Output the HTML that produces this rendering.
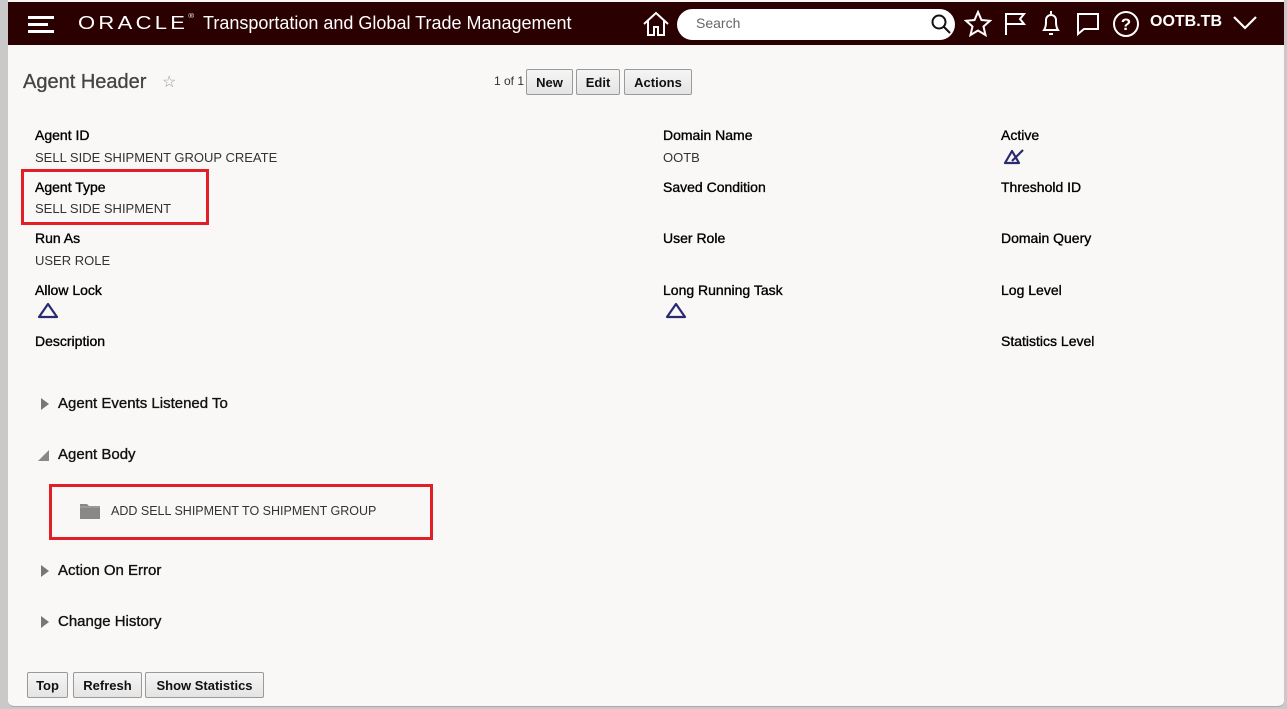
<!DOCTYPE html>
<html><head><meta charset="utf-8"><style>
*{margin:0;padding:0;box-sizing:border-box}
body{width:1287px;height:709px;background:#c9c9c9;font-family:"Liberation Sans",Arial,sans-serif;position:relative;overflow:hidden}
#page{position:absolute;left:8px;top:0;width:1276px;height:707px;background:#f9f8f7;border-radius:0 0 6px 6px;border-bottom:1px solid #aaa}
#bar{position:absolute;left:0;top:2px;width:1276px;height:43px;background:#2b0000;color:#fff}
.a{position:absolute}
.lbl{position:absolute;font-size:14px;color:#000;-webkit-text-stroke:0.35px #000}
.val{position:absolute;font-size:13px;color:#333}
.btn{position:absolute;height:26px;border:1px solid #9a9a9a;border-radius:2px;background:linear-gradient(#f5f5f5,#e4e4e4);font-size:13px;font-weight:bold;color:#111;display:flex;align-items:center;justify-content:center}
.sec{position:absolute;font-size:15px;color:#111;-webkit-text-stroke:0.35px #111}
.tri{position:absolute;width:0;height:0;border-top:6px solid transparent;border-bottom:6px solid transparent;border-left:8px solid #777}
.red{position:absolute;border:3px solid #e21e26}
</style></head><body>
<div id="page">
<div id="bar">
 <div class="a" style="left:20px;top:14px;width:26px;height:3px;background:#fff"></div>
 <div class="a" style="left:20px;top:21px;width:20px;height:3px;background:#fff"></div>
 <div class="a" style="left:20px;top:28px;width:26px;height:3px;background:#fff"></div>
 <div class="a" style="left:70px;top:8px;font-size:22px;letter-spacing:3.3px;transform:scaleY(0.85);transform-origin:left center">ORACLE<span style="font-size:8px;vertical-align:top;letter-spacing:0">®</span></div>
 <div class="a" style="left:195px;top:11px;font-size:18px">Transportation and Global Trade Management</div>
 <svg class="a" style="left:633px;top:8px" width="30" height="28" viewBox="0 0 30 28" fill="none" stroke="#fff" stroke-width="2"><path d="M3 14L15 3l12 11M7 11v14h6v-8h4v8h6V11"/></svg>
 <div class="a" style="left:669px;top:7px;width:278px;height:31px;background:#fff;border-radius:16px;color:#666;font-size:14px;padding:6px 0 0 19px">Search</div>
 <svg class="a" style="left:922px;top:11px" width="22" height="22" viewBox="0 0 22 22" fill="none" stroke="#111" stroke-width="2"><circle cx="9" cy="9" r="6.5"/><path d="M14 14l6 6"/></svg>
 <svg class="a" style="left:956px;top:8px" width="28" height="28" viewBox="0 0 28 28" fill="none" stroke="#fff" stroke-width="2"><path d="M14 2l3.5 8 8.5.8-6.5 5.7 2 8.5L14 20.5 6.5 25l2-8.5L2 10.8l8.5-.8z"/></svg>
 <svg class="a" style="left:995px;top:9px" width="24" height="26" viewBox="0 0 24 26" fill="none" stroke="#fff" stroke-width="2"><path d="M3 24V3h18l-4 5 4 5H3"/></svg>
 <svg class="a" style="left:1031px;top:6px" width="24" height="30" viewBox="0 0 24 30" fill="none" stroke="#fff" stroke-width="2"><path d="M12 3v3M5 22c2-3 2-6 2-10a5 5 0 0110 0c0 4 0 7 2 10zM10 26h4"/></svg>
 <svg class="a" style="left:1067px;top:9px" width="26" height="26" viewBox="0 0 26 26" fill="none" stroke="#fff" stroke-width="2"><path d="M3 3h20v15H9l-6 5z"/></svg>
 <svg class="a" style="left:1103px;top:7px" width="30" height="30" viewBox="0 0 30 30" fill="none" stroke="#fff" stroke-width="2"><circle cx="15" cy="15" r="12"/><text x="15" y="21" fill="#fff" stroke="none" font-size="17" font-weight="bold" text-anchor="middle" font-family="Liberation Sans">?</text></svg>
 <div class="a" style="left:1142px;top:11px;font-size:16px;font-weight:bold">OOTB.TB</div>
 <svg class="a" style="left:1224px;top:12px" width="26" height="18" viewBox="0 0 26 18" fill="none" stroke="#fff" stroke-width="2.2"><path d="M2 3l11 11L24 3"/></svg>
</div>
<div class="a" style="left:15px;top:71px;font-size:20px;color:#444;-webkit-text-stroke:0.3px #444">Agent Header</div>
<div class="a" style="left:154px;top:72px;font-size:16px;color:#999">☆</div>
<div class="a" style="left:486px;top:74px;font-size:12px;color:#333">1 of 1</div>
<div class="btn" style="left:518px;top:69px;width:47px">New</div>
<div class="btn" style="left:568px;top:69px;width:44px">Edit</div>
<div class="btn" style="left:616px;top:69px;width:68px">Actions</div>

<div class="lbl" style="left:27px;top:127px">Agent ID</div>
<div class="val" style="left:27px;top:150px">SELL SIDE SHIPMENT GROUP CREATE</div>
<div class="lbl" style="left:27px;top:179px">Agent Type</div>
<div class="val" style="left:27px;top:201px">SELL SIDE SHIPMENT</div>
<div class="red" style="left:13px;top:169px;width:188px;height:56px"></div>
<div class="lbl" style="left:27px;top:230px">Run As</div>
<div class="val" style="left:27px;top:253px">USER ROLE</div>
<div class="lbl" style="left:27px;top:282px">Allow Lock</div>
<svg class="a" style="left:29px;top:302px" width="22" height="18" viewBox="0 0 22 18" fill="none" stroke="#2a2a6e" stroke-width="2.2"><path d="M11 2L2 15h18z" stroke-linejoin="round"/></svg>
<div class="lbl" style="left:27px;top:333px">Description</div>

<div class="lbl" style="left:655px;top:127px">Domain Name</div>
<div class="val" style="left:655px;top:150px">OOTB</div>
<div class="lbl" style="left:655px;top:179px">Saved Condition</div>
<div class="lbl" style="left:655px;top:230px">User Role</div>
<div class="lbl" style="left:655px;top:282px">Long Running Task</div>
<svg class="a" style="left:657px;top:302px" width="22" height="18" viewBox="0 0 22 18" fill="none" stroke="#2a2a6e" stroke-width="2.2"><path d="M11 2L2 15h18z" stroke-linejoin="round"/></svg>

<div class="lbl" style="left:993px;top:127px">Active</div>
<svg class="a" style="left:995px;top:148px" width="24" height="18" viewBox="0 0 24 18" fill="none" stroke="#2a2a6e" stroke-width="2.2"><path d="M9 3L2 15h14zM9 13l11-11" stroke-linejoin="round"/></svg>
<div class="lbl" style="left:993px;top:179px">Threshold ID</div>
<div class="lbl" style="left:993px;top:230px">Domain Query</div>
<div class="lbl" style="left:993px;top:282px">Log Level</div>
<div class="lbl" style="left:993px;top:333px">Statistics Level</div>

<div class="tri" style="left:33px;top:398px"></div>
<div class="sec" style="left:50px;top:395px">Agent Events Listened To</div>
<div class="a" style="left:30px;top:450px;width:0;height:0;border-left:11px solid transparent;border-bottom:11px solid #888"></div>
<div class="sec" style="left:50px;top:446px">Agent Body</div>
<div class="red" style="left:41px;top:484px;width:384px;height:56px"></div>
<svg class="a" style="left:72px;top:503px" width="20" height="16" viewBox="0 0 20 16"><path d="M0 1h7l2 2h11v13H0z" fill="#888"/><path d="M0 4h20" stroke="#aaa"/></svg>
<div class="val" style="left:103px;top:504px;font-size:12.5px">ADD SELL SHIPMENT TO SHIPMENT GROUP</div>
<div class="tri" style="left:33px;top:565px"></div>
<div class="sec" style="left:50px;top:562px">Action On Error</div>
<div class="tri" style="left:33px;top:616px"></div>
<div class="sec" style="left:50px;top:613px">Change History</div>

<div class="btn" style="left:19px;top:672px;width:41px">Top</div>
<div class="btn" style="left:65px;top:672px;width:69px">Refresh</div>
<div class="btn" style="left:137px;top:672px;width:119px">Show Statistics</div>
</div>
</body></html>
